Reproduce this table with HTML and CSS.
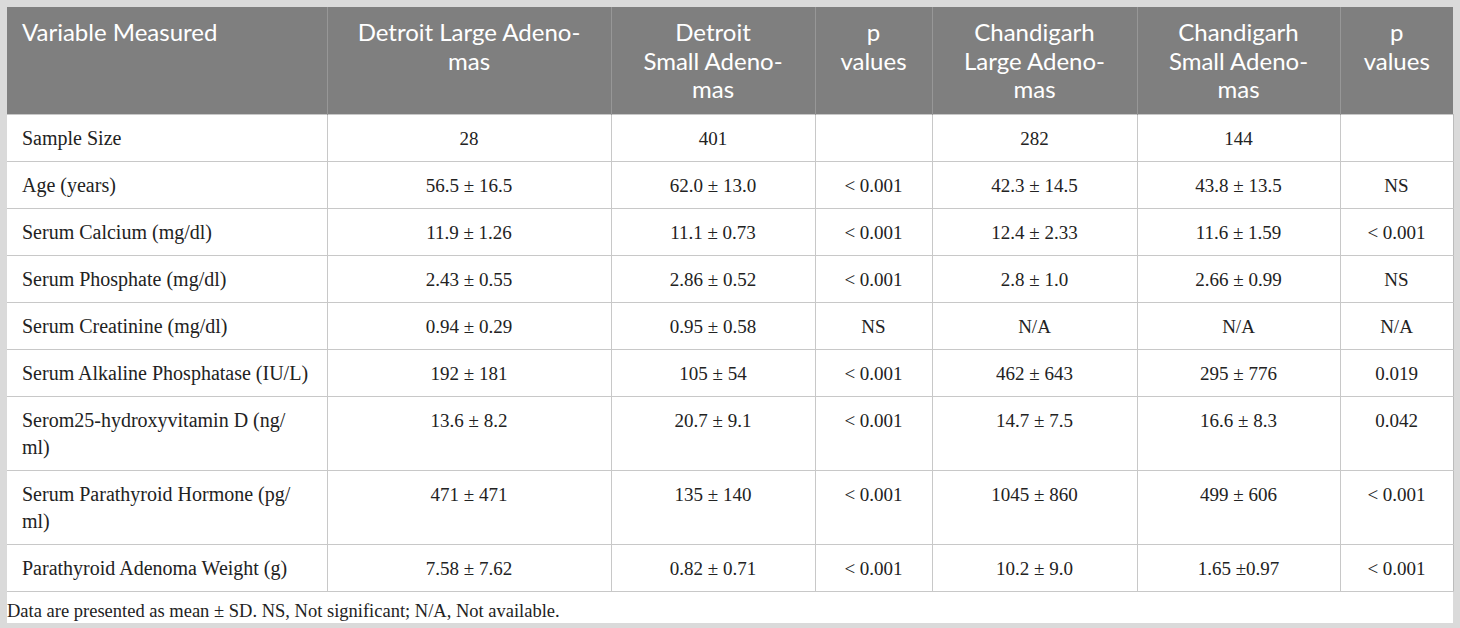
FILE: index.html
```html
<!DOCTYPE html>
<html lang="en">
<head>
    <meta charset="UTF-8">
    <meta name="viewport" content="width=device-width, initial-scale=1.0">
    <title>Adenoma Comparison</title>
    <link rel="stylesheet" href="styles.css">
</head>
<body>
    <div class="table-wrap">
        <table class="data-table">
            <colgroup>
                <col class="col-var">
                <col class="col-dl">
                <col class="col-ds">
                <col class="col-p1">
                <col class="col-cl">
                <col class="col-cs">
                <col class="col-p2">
            </colgroup>
            <thead>
                <tr>
                    <th class="left">Variable Measured</th>
                    <th>Detroit Large Adeno-<br>mas</th>
                    <th>Detroit<br>Small Adeno-<br>mas</th>
                    <th>p<br>values</th>
                    <th>Chandigarh<br>Large Adeno-<br>mas</th>
                    <th>Chandigarh<br>Small Adeno-<br>mas</th>
                    <th>p<br>values</th>
                </tr>
            </thead>
            <tbody>
                <tr>
                    <td class="left">Sample Size</td>
                    <td>28</td>
                    <td>401</td>
                    <td></td>
                    <td>282</td>
                    <td>144</td>
                    <td></td>
                </tr>
                <tr>
                    <td class="left">Age (years)</td>
                    <td>56.5 ± 16.5</td>
                    <td>62.0 ± 13.0</td>
                    <td>&lt; 0.001</td>
                    <td>42.3 ± 14.5</td>
                    <td>43.8 ± 13.5</td>
                    <td>NS</td>
                </tr>
                <tr>
                    <td class="left">Serum Calcium (mg/dl)</td>
                    <td>11.9 ± 1.26</td>
                    <td>11.1 ± 0.73</td>
                    <td>&lt; 0.001</td>
                    <td>12.4 ± 2.33</td>
                    <td>11.6 ± 1.59</td>
                    <td>&lt; 0.001</td>
                </tr>
                <tr>
                    <td class="left">Serum Phosphate (mg/dl)</td>
                    <td>2.43 ± 0.55</td>
                    <td>2.86 ± 0.52</td>
                    <td>&lt; 0.001</td>
                    <td>2.8 ± 1.0</td>
                    <td>2.66 ± 0.99</td>
                    <td>NS</td>
                </tr>
                <tr>
                    <td class="left">Serum Creatinine (mg/dl)</td>
                    <td>0.94 ± 0.29</td>
                    <td>0.95 ± 0.58</td>
                    <td>NS</td>
                    <td>N/A</td>
                    <td>N/A</td>
                    <td>N/A</td>
                </tr>
                <tr>
                    <td class="left">Serum Alkaline Phosphatase (IU/L)</td>
                    <td>192 ± 181</td>
                    <td>105 ± 54</td>
                    <td>&lt; 0.001</td>
                    <td>462 ± 643</td>
                    <td>295 ± 776</td>
                    <td>0.019</td>
                </tr>
                <tr>
                    <td class="left">Serom25-hydroxyvitamin D (ng/<br>ml)</td>
                    <td>13.6 ± 8.2</td>
                    <td>20.7 ± 9.1</td>
                    <td>&lt; 0.001</td>
                    <td>14.7 ± 7.5</td>
                    <td>16.6 ± 8.3</td>
                    <td>0.042</td>
                </tr>
                <tr>
                    <td class="left">Serum Parathyroid Hormone (pg/<br>ml)</td>
                    <td>471 ± 471</td>
                    <td>135 ± 140</td>
                    <td>&lt; 0.001</td>
                    <td>1045 ± 860</td>
                    <td>499 ± 606</td>
                    <td>&lt; 0.001</td>
                </tr>
                <tr>
                    <td class="left">Parathyroid Adenoma Weight (g)</td>
                    <td>7.58 ± 7.62</td>
                    <td>0.82 ± 0.71</td>
                    <td>&lt; 0.001</td>
                    <td>10.2 ± 9.0</td>
                    <td>1.65 ±0.97</td>
                    <td>&lt; 0.001</td>
                </tr>
            </tbody>
        </table>
        <p class="footnote">Data are presented as mean ± SD. NS, Not significant; N/A, Not available.</p>
    </div>
</body>
</html>
```

FILE: styles.css
```css
body {
    margin: 0;
    padding: 7px;
    background-color: #dadada;
    font-family: "Liberation Serif", "Times New Roman", serif;
    color: #222;
}

.table-wrap {
    width: 1446px;
    background: #fff;
}

.data-table {
    width: 100%;
    border-collapse: collapse;
    table-layout: fixed;
}

.col-var { width: 320px; }
.col-dl { width: 284px; }
.col-ds { width: 204px; }
.col-p1 { width: 117px; }
.col-cl { width: 205px; }
.col-cs { width: 203px; }
.col-p2 { width: 113px; }

.data-table th {
    background: #7f7f7f;
    color: #fff;
    font-family: Lato, "Open Sans", sans-serif;
    font-weight: normal;
    font-size: 24px;
    line-height: 28.5px;
    height: 107px;
    padding: 11px 10px 0;
    box-sizing: border-box;
    vertical-align: top;
    text-align: center;
    border-left: 1px solid #979797;
}

.data-table th:first-child {
    border-left: none;
}

.data-table td {
    font-size: 19px;
    line-height: 27px;
    padding: 10px 10px 9px;
    vertical-align: top;
    text-align: center;
    border: 1px solid #c8c8c8;
}

.data-table tr td:first-child {
    border-left: none;
}

.data-table tr td:last-child {
    border-right: 1px solid #bcbcbc;
}

.data-table td.left {
    text-align: left;
    padding-left: 15px;
    font-size: 20px;
}

.data-table th.left {
    text-align: left;
    padding-left: 15px;
}

.footnote {
    margin: 0;
    padding: 9px 0 0;
    height: 31px;
    box-sizing: border-box;
    font-size: 18.5px;
    line-height: 20px;
    color: #222;
}
```
